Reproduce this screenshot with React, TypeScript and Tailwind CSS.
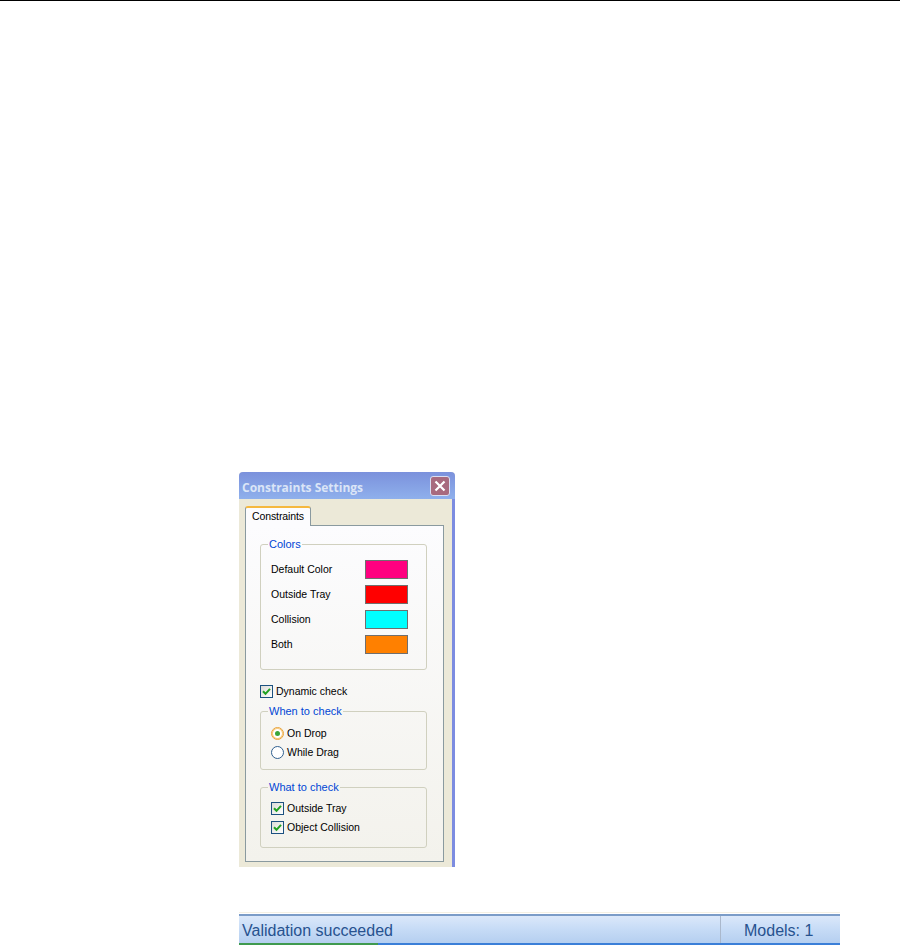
const font = "font-['Liberation_Sans',Arial,sans-serif]";

function CheckBox() {
  return (
    <span className="flex h-[13px] w-[13px] shrink-0 items-center justify-center border border-[#1c5180] bg-gradient-to-br from-[#dcdcd7] to-white">
      <svg width="9" height="9" viewBox="0 0 9 9">
        <path d="M1 4.2 L3.5 6.8 L8 1.8" fill="none" stroke="#21a121" strokeWidth="2" />
      </svg>
    </span>
  );
}

function Radio({ on }: { on?: boolean }) {
  return (
    <span
      className={`flex h-[13px] w-[13px] shrink-0 items-center justify-center rounded-full border bg-white ${
        on ? "border-[#e8a33a] ring-1 ring-inset ring-[#f8c878]" : "border-[#2f5f8f]"
      }`}
    >
      {on && <span className="h-[5px] w-[5px] rounded-full bg-[#3aa53a]" />}
    </span>
  );
}

function Group({
  title,
  className,
  children,
}: {
  title: string;
  className: string;
  children: React.ReactNode;
}) {
  return (
    <fieldset className={`ml-[14px] w-[167px] rounded-[3px] border border-[#d0d0bf] ${className}`}>
      <legend className="ml-[7px] px-[1px] text-[11px] leading-[13px] text-[#0046d5]">{title}</legend>
      {children}
    </fieldset>
  );
}

const swatches = [
  { label: "Default Color", color: "bg-[#ff0080]" },
  { label: "Outside Tray", color: "bg-[#ff0000]" },
  { label: "Collision", color: "bg-[#00ffff]" },
  { label: "Both", color: "bg-[#ff8000]" },
];

function SettingsDialog() {
  return (
    <div className="ml-[239px] flex h-[395px] w-[216px] flex-col rounded-t-[4px] bg-[#ece9d8]">
      {/* title bar */}
      <div className="flex h-[27px] items-center justify-between rounded-t-[4px] bg-gradient-to-b from-[#7b91dc] to-[#8fb0ec] pl-[3px] pr-[5px]">
        <span className="pt-[4px] font-['Open_Sans',sans-serif] text-[12px] font-bold text-[#dbe5f7]">
          Constraints Settings
        </span>
        <span className="flex h-[20px] w-[20px] items-center justify-center rounded-[3px] border border-[#d9dff2] bg-[#a86a7e]">
          <svg width="12" height="12" viewBox="0 0 12 12">
            <path d="M1.5 1.5 L10.5 10.5 M10.5 1.5 L1.5 10.5" stroke="#fff" strokeWidth="2.2" />
          </svg>
        </span>
      </div>

      <div className="flex flex-1 flex-col border-r-[3px] border-[#7c8ce0] pl-[6px] pt-[7px]">
        {/* tab */}
        <div className="z-10 -mb-px flex h-[20px] w-[66px] items-center justify-center rounded-t-[3px] border-x border-t-2 border-x-[#8a9aa0] border-t-[#f5b83f] border-b-0 bg-[#fcfcfe] pb-[1px] text-[10.5px] tracking-[-0.1px] text-black">
          Constraints
        </div>
        {/* page */}
        <div className="h-[337px] w-[199px] border border-[#8a9a9f] bg-gradient-to-b from-[#fcfcfe] to-[#f3f2ec] pt-[12px]">
          <Group title="Colors" className="h-[132px]">
            <div className="flex flex-col gap-[5px] pl-[10px] pr-[18px] pt-[8px]">
              {swatches.map((s) => (
                <div key={s.label} className="flex h-[20px] items-center justify-between">
                  <span className="pt-[1px] text-[10.5px] text-black">{s.label}</span>
                  <span className={`mt-[1px] h-[19px] w-[43px] border border-[#6f6f6f] ${s.color}`} />
                </div>
              ))}
            </div>
          </Group>

          <label className="ml-[14px] mt-[15px] flex items-center gap-[3px] text-[10.5px] leading-[13px] text-black">
            <CheckBox />
            Dynamic check
          </label>

          <Group title="When to check" className="mt-[7px] h-[65px]">
            <div className="flex flex-col gap-[6px] pl-[10px] pt-[9px] text-[10.5px] leading-[13px] text-black">
              <div className="flex items-center gap-[3px]">
                <Radio on />
                On Drop
              </div>
              <div className="flex items-center gap-[3px]">
                <Radio />
                While Drag
              </div>
            </div>
          </Group>

          <Group title="What to check" className="mt-[11px] h-[67px]">
            <div className="flex flex-col gap-[6px] pl-[10px] pt-[8px] text-[10.5px] leading-[13px] text-black">
              <div className="flex items-center gap-[3px]">
                <CheckBox />
                Outside Tray
              </div>
              <div className="flex items-center gap-[3px]">
                <CheckBox />
                Object Collision
              </div>
            </div>
          </Group>
        </div>
      </div>
    </div>
  );
}

function StatusBar() {
  return (
    <div className="ml-[239px] mt-[45px] flex h-[33px] w-[601px] flex-col border-t border-[#f4f0e4]">
      <div className="mt-[1px] h-[2px] bg-[#7b9cc8]" />
      <div className="flex flex-1 bg-gradient-to-b from-[#dbe8fa] via-[#c6dbf6] to-[#b5cff0] pt-[3px] text-[#27528f]">
        <span className="flex-1 pl-[3px] text-[16px] leading-[24px]">Validation succeeded</span>
        <span className="-mt-[3px] w-[120px] border-l border-[#aab8cc] pl-[23px] pt-[3px] text-[16px] leading-[24px]">
          Models: 1
        </span>
      </div>
      <div className="flex h-[2px]">
        <div className="w-[139px] bg-[#3f9a4f]" />
        <div className="flex-1 bg-[#3b7fd8]" />
      </div>
    </div>
  );
}

export default function App() {
  return (
    <div className={`flex h-[945px] w-[900px] flex-col overflow-hidden bg-white ${font}`}>
      <div className="mb-[471px] h-px shrink-0 bg-black" />
      <SettingsDialog />
      <StatusBar />
    </div>
  );
}
